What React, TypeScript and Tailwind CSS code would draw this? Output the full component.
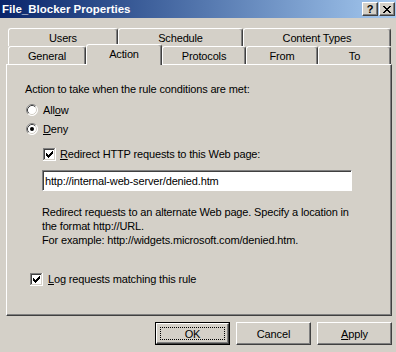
import React from "react";

const tabBase =
  "box-border flex items-center justify-center border-l border-t border-r border-l-white border-t-white border-r-[#404040] rounded-tl-[3px] rounded-tr-[3px] shadow-[inset_-1px_0_#808080] bg-[#d4d0c8]";

function Tab({ label, w }: { label: string; w: string }) {
  return <div className={`${tabBase} h-[18px] ${w}`}>{label}</div>;
}

function Check() {
  return (
    <svg width="13" height="13" viewBox="0 0 13 13" shapeRendering="crispEdges">
      <rect x="0" y="0" width="13" height="13" fill="#ffffff" />
      <rect x="0" y="0" width="12" height="1" fill="#808080" />
      <rect x="0" y="0" width="1" height="12" fill="#808080" />
      <rect x="1" y="1" width="10" height="1" fill="#404040" />
      <rect x="1" y="1" width="1" height="10" fill="#404040" />
      <rect x="1" y="11" width="11" height="1" fill="#d4d0c8" />
      <rect x="11" y="1" width="1" height="11" fill="#d4d0c8" />
      {/* the tick: seven 3px columns */}
      <rect x="3" y="5" width="1" height="3" fill="#000" />
      <rect x="4" y="6" width="1" height="3" fill="#000" />
      <rect x="5" y="7" width="1" height="3" fill="#000" />
      <rect x="6" y="6" width="1" height="3" fill="#000" />
      <rect x="7" y="5" width="1" height="3" fill="#000" />
      <rect x="8" y="4" width="1" height="3" fill="#000" />
      <rect x="9" y="3" width="1" height="3" fill="#000" />
    </svg>
  );
}

function Radio({ on }: { on?: boolean }) {
  return (
    <svg width="12" height="12" viewBox="0 0 12 12">
      <circle cx="6" cy="6" r="5.5" fill="#fff" />
      <path d="M2.11 9.89 A5.5 5.5 0 0 1 9.89 2.11" fill="none" stroke="#808080" />
      <path d="M9.89 2.11 A5.5 5.5 0 0 1 2.11 9.89" fill="none" stroke="#ffffff" />
      <path d="M2.82 9.18 A4.5 4.5 0 0 1 9.18 2.82" fill="none" stroke="#404040" />
      <path d="M9.18 2.82 A4.5 4.5 0 0 1 2.82 9.18" fill="none" stroke="#d4d0c8" />
      {on && <circle cx="6" cy="6" r="2" fill="#000" />}
    </svg>
  );
}

function Button({ children, def }: { children: React.ReactNode; def?: boolean }) {
  if (def) {
    return (
      <div className="box-border w-[75px] h-[23px] border border-black">
        <div className="box-border h-full border border-t-white border-l-white border-r-[#404040] border-b-[#404040] shadow-[inset_-1px_-1px_#808080] p-[3px] flex">
          <div className="flex-1 border border-dotted border-black flex items-center justify-center">
            {children}
          </div>
        </div>
      </div>
    );
  }
  return (
    <div className="box-border w-[75px] h-[23px] border border-t-white border-l-white border-r-[#404040] border-b-[#404040] shadow-[inset_-1px_-1px_#808080] flex items-center justify-center">
      {children}
    </div>
  );
}

function CapButton({ children }: { children: React.ReactNode }) {
  return (
    <div className="box-border w-[16px] h-[14px] bg-[#d4d0c8] border border-t-white border-l-white border-r-[#404040] border-b-[#404040] shadow-[inset_-1px_-1px_#808080] flex items-center justify-center text-black font-bold text-[11px] leading-none">
      {children}
    </div>
  );
}

export default function App() {
  return (
    <div className="w-[396px] h-[352px] bg-[#d4d0c8] text-black text-[11px] leading-[14px] tracking-[-0.15px] font-['Liberation_Sans',Arial,sans-serif] overflow-hidden">
      {/* title bar */}
      <div className="h-[18px] flex items-center justify-between pl-[2px] pr-[1px] bg-gradient-to-r from-[#0a246a] to-[#a6caf0]">
        <span className="text-white font-bold text-[11.5px] tracking-normal">File_Blocker Properties</span>
        <div className="flex gap-[1px]">
          <CapButton>?</CapButton>
          <CapButton>
            <svg width="8" height="7" viewBox="0 0 8 7" shapeRendering="crispEdges">
              <path d="M0 0h2v1H0zM6 0h2v1H6zM1 1h2v1H1zM5 1h2v1H5zM2 2h4v1H2zM3 3h2v1H3zM2 4h4v1H2zM1 5h2v1H1zM5 5h2v1H5zM0 6h2v1H0zM6 6h2v1H6z" fill="#000" />
            </svg>
          </CapButton>
        </div>
      </div>

      <div className="pl-[6px] pt-[10px]">
        <div className="ml-[2px] flex">
          <Tab label="Users" w="w-[110px]" />
          <Tab label="Schedule" w="w-[125px]" />
          <Tab label="Content Types" w="w-[148px]" />
        </div>
        <div className="ml-[2px] flex items-start h-[18px]">
          <Tab label="General" w="w-[78px]" />
          <div className={`${tabBase} relative z-10 w-[76px] h-[21px] -mt-[2px] pb-[3px]`}>Action</div>
          <Tab label="Protocols" w="w-[84px]" />
          <Tab label="From" w="w-[72px]" />
          <Tab label="To" w="w-[73px]" />
        </div>

        <div className="box-border w-[386px] h-[252px] border border-t-white border-l-white border-r-[#404040] border-b-[#404040] shadow-[inset_-1px_-1px_#808080] flex flex-col">
          <div className="mt-[17px] ml-[18px]">Action to take when the rule conditions are met:</div>
          <div className="mt-[7px] ml-[19px] flex items-center gap-[5px] h-[14px]">
            <Radio />
            <span>
              All<u>o</u>w
            </span>
          </div>
          <div className="mt-[5px] ml-[19px] flex items-center gap-[5px] h-[14px]">
            <Radio on />
            <span>
              <u>D</u>eny
            </span>
          </div>
          <div className="mt-[11px] ml-[36px] flex items-center gap-[4px] h-[14px]">
            <Check />
            <span>
              <u>R</u>edirect HTTP requests to this Web page:
            </span>
          </div>
          <div className="mt-[9px] ml-[35px] box-border w-[310px] h-[21px] bg-white border border-t-[#808080] border-l-[#808080] border-r-white border-b-white shadow-[inset_1px_1px_#404040] flex items-center pl-[2px]">
            http://internal-web-server/denied.htm
          </div>
          <div className="mt-[14px] ml-[35px]">
            Redirect requests to an alternate Web page. Specify a location in
            <br />
            the format http://URL.
            <br />
            For example: http://widgets.microsoft.com/denied.htm.
          </div>
          <div className="mt-[25px] ml-[23px] flex items-center gap-[5px] h-[14px]">
            <Check />
            <span>
              <u>L</u>og requests matching this rule
            </span>
          </div>
        </div>
      </div>

      <div className="mt-[6px] flex justify-end gap-[6px] pr-[4px]">
        <Button def>OK</Button>
        <Button>Cancel</Button>
        <Button>
          <span>
            <u>A</u>pply
          </span>
        </Button>
      </div>
    </div>
  );
}
